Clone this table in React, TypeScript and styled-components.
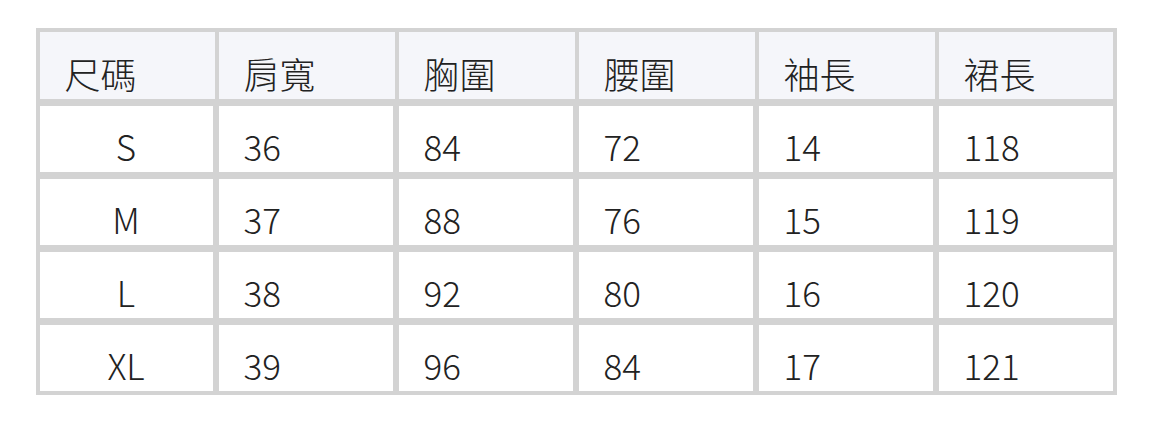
import React from "react";
import styled, { createGlobalStyle } from "styled-components";

const Global = createGlobalStyle`
  html, body { margin: 0; padding: 0; background: #ffffff; }
  body { font-family: "Noto Sans CJK TC", "Noto Sans", sans-serif; color: #222; }
`;

const Page = styled.div`
  width: 1152px;
  height: 422px;
  padding-top: 28px;
  box-sizing: border-box;
  display: flex;
  justify-content: center;
`;

const Table = styled.div`
  width: 1081px;
  height: fit-content;
  box-sizing: border-box;
  border: 4px solid #d3d3d3;
  background: #d3d3d3;
  display: flex;
  flex-direction: column;
  gap: 7px;
`;

const Row = styled.div<{ $head?: boolean }>`
  display: grid;
  grid-template-columns: 175fr 176fr 176fr 176fr 176fr 174fr;
  column-gap: 4px;
  height: ${(p) => (p.$head ? "67px" : "66px")};
`;

const HeadCell = styled.div`
  background: #f5f6fa;
  display: flex;
  align-items: flex-end;
  padding: 0 0 2px 25px;
  font-size: 36px;
  font-weight: 300;
  line-height: 1.3;
  color: #222;
`;

const BodyCell = styled.div<{ $center?: boolean; $last?: boolean }>`
  background: #ffffff;
  margin-right: ${(p) => (p.$last ? "0" : "2px")};
  display: flex;
  align-items: center;
  justify-content: ${(p) => (p.$center ? "center" : "flex-start")};
  padding: 13px 0 0 ${(p) => (p.$center ? "0" : "25px")};
  font-size: 35px;
  font-weight: 300;
  line-height: 1;
  color: #222;
`;

const headers = ["尺碼", "肩寬", "胸圍", "腰圍", "袖長", "裙長"];
const rows = [
  ["S", "36", "84", "72", "14", "118"],
  ["M", "37", "88", "76", "15", "119"],
  ["L", "38", "92", "80", "16", "120"],
  ["XL", "39", "96", "84", "17", "121"],
];

export default function App() {
  return (
    <>
      <Global />
      <Page>
        <Table>
          <Row $head>
            {headers.map((h) => (
              <HeadCell key={h}>{h}</HeadCell>
            ))}
          </Row>
          {rows.map((r) => (
            <Row key={r[0]}>
              {r.map((c, i) => (
                <BodyCell key={i} $center={i === 0} $last={i === r.length - 1}>
                  {c}
                </BodyCell>
              ))}
            </Row>
          ))}
        </Table>
      </Page>
    </>
  );
}
